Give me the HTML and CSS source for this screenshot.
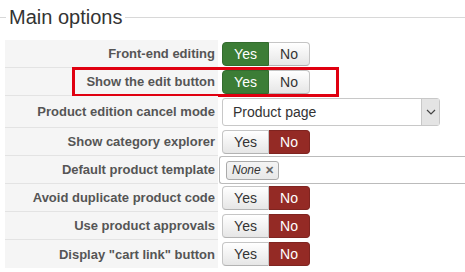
FILE: index.html
```html
<!DOCTYPE html>
<html>
<head>
<meta charset="utf-8">
<link rel="stylesheet" href="styles.css">
</head>
<body>
<div class="legend-row">
  <span class="legend-line short"></span>
  <span class="legend">Main options</span>
  <span class="legend-line"></span>
</div>
<div class="options">
  <div class="row">
    <div class="label">Front-end editing</div>
    <div class="ctrl"><div class="toggle"><span class="btn yes on">Yes</span><span class="btn no">No</span></div></div>
  </div>
  <div class="row">
    <div class="label">Show the edit button</div>
    <div class="ctrl"><div class="toggle"><span class="btn yes on">Yes</span><span class="btn no">No</span></div></div>
    <div class="highlight"></div>
  </div>
  <div class="row tall">
    <div class="label">Product edition cancel mode</div>
    <div class="ctrl"><div class="select"><span class="sel-text">Product page</span><span class="sel-arrow"><svg width="10" height="6" viewBox="0 0 10 6"><path d="M1 1 L5 5 L9 1" fill="none" stroke="#444" stroke-width="1.2"/></svg></span></div></div>
  </div>
  <div class="row">
    <div class="label">Show category explorer</div>
    <div class="ctrl"><div class="toggle"><span class="btn yes">Yes</span><span class="btn no off">No</span></div></div>
  </div>
  <div class="row">
    <div class="label">Default product template</div>
    <div class="ctrl wide"><div class="tagbox"><span class="tag"><i>None</i><span class="x">✕</span></span></div></div>
  </div>
  <div class="row">
    <div class="label">Avoid duplicate product code</div>
    <div class="ctrl"><div class="toggle"><span class="btn yes">Yes</span><span class="btn no off">No</span></div></div>
  </div>
  <div class="row">
    <div class="label">Use product approvals</div>
    <div class="ctrl"><div class="toggle"><span class="btn yes">Yes</span><span class="btn no off">No</span></div></div>
  </div>
  <div class="row last">
    <div class="label">Display "cart link" button</div>
    <div class="ctrl"><div class="toggle"><span class="btn yes">Yes</span><span class="btn no off">No</span></div></div>
  </div>
</div>
</body>
</html>
```
FILE: styles.css
```css
html, body {
  margin: 0;
  padding: 0;
  background: #fff;
  font-family: "Liberation Sans", Arial, sans-serif;
  overflow: hidden;
}
.legend-row {
  display: flex;
  align-items: center;
  height: 34px;
}
.legend-line {
  flex: 1;
  height: 1px;
  background: #d8d8d8;
  margin-top: 1px;
}
.legend-line.short {
  flex: 0 0 6px;
}
.legend {
  font-size: 20px;
  color: #333;
  padding: 0 3px;
  line-height: 24px;
}
.options {
  margin-left: 5px;
  margin-top: 6px;
}
.row {
  position: relative;
  display: grid;
  grid-template-columns: 213px 1fr;
  height: 28px;
}
.row.tall {
  height: 32px;
}
.label {
  background: #f5f5f5;
  border-bottom: 1px solid #e3e3e3;
  font-weight: bold;
  font-size: 13px;
  color: #555;
  padding-right: 3px;
  display: flex;
  align-items: center;
  justify-content: flex-end;
}
.row.last .label { border-bottom: none; }
.ctrl {
  display: flex;
  align-items: center;
  padding-left: 4px;
}
.ctrl.wide { padding-left: 1px; }
.toggle {
  display: flex;
  height: 24px;
}
.btn {
  display: flex;
  align-items: center;
  justify-content: center;
  font-size: 14px;
  color: #333;
  background: linear-gradient(#ffffff, #e6e6e6);
  border: 1px solid #c5c5c5;
  border-bottom-color: #b3b3b3;
  box-sizing: border-box;
}
.btn.yes {
  width: 47px;
  border-radius: 4px 0 0 4px;
}
.btn.no {
  width: 41px;
  border-left: none;
  border-radius: 0 4px 4px 0;
}
.btn.on {
  background: #3c7d36;
  border-color: #336b2e;
  color: #fff;
}
.btn.off {
  background: #942a25;
  border-color: #7f2420;
  color: #fff;
}
.select {
  width: 218px;
  height: 28px;
  box-sizing: border-box;
  border: 1px solid #c8c8c8;
  border-radius: 3px;
  display: flex;
  align-items: center;
  background: #fff;
}
.sel-text {
  flex: 1;
  font-size: 14px;
  color: #333;
  padding-left: 10px;
}
.sel-arrow {
  width: 17px;
  height: 26px;
  background: #e4e4e4;
  border-left: 1px solid #c8c8c8;
  display: flex;
  align-items: center;
  justify-content: center;
}
.tagbox {
  width: 260px;
  height: 28px;
  box-sizing: border-box;
  border: 1px solid #bbb;
  border-right: none;
  border-radius: 3px 0 0 3px;
  display: flex;
  align-items: center;
  padding-left: 6px;
}
.tag {
  display: flex;
  align-items: center;
  height: 17px;
  padding: 0 4px 0 5px;
  border: 1px solid #aaa;
  border-radius: 3px;
  background: linear-gradient(#f4f4f4, #e8e8e8);
  font-size: 12px;
  color: #333;
}
.tag .x {
  font-size: 11px;
  color: #666;
  margin-left: 4px;
  font-weight: bold;
}
.highlight {
  position: absolute;
  left: 67px;
  top: -1px;
  width: 267px;
  height: 30px;
  border: 3px solid #e00010;
  box-sizing: border-box;
}
```
